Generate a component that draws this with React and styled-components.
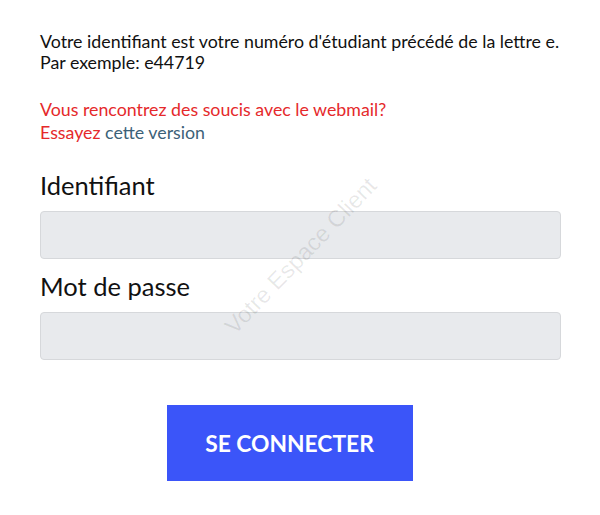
import React from "react";
import styled, { createGlobalStyle } from "styled-components";

const Global = createGlobalStyle`
  html, body { margin: 0; padding: 0; background: #fff; }
  body { font-family: Lato, "Noto Sans", sans-serif; color: #111; }
`;

const Page = styled.div`
  position: relative;
  padding: 31px 40px 0 40px;
  width: 600px;
  height: 515px;
  box-sizing: border-box;
  overflow: hidden;
`;

const Info = styled.p`
  margin: 0;
  font-size: 17.8px;
  line-height: 21px;
  color: #111;
`;

const Alert = styled.p`
  margin: 25px 0 0 0;
  font-size: 17.8px;
  line-height: 23px;
  color: #e5292b;
`;

const Link = styled.a`
  color: #3c6178;
  text-decoration: none;
`;

const Form = styled.form`
  margin-top: 26px;
  display: flex;
  flex-direction: column;
`;

const Label = styled.label`
  font-size: 25.5px;
  line-height: 30px;
  color: #111;
  margin-bottom: 11px;
  margin-top: ${(p) => (p.$spaced ? "12px" : "0")};
`;

const Input = styled.input`
  box-sizing: border-box;
  width: 521px;
  height: 48px;
  background: #e8eaed;
  border: 1px solid #d6d8db;
  border-radius: 4px;
  outline: none;
  font-size: 16px;
  padding: 0 12px;
`;

const ButtonRow = styled.div`
  display: flex;
  justify-content: center;
  margin-top: 45px;
  padding-right: 21px;
`;

const Button = styled.button`
  width: 246px;
  height: 76px;
  background: #3b55f9;
  color: #fff;
  border: none;
  font-family: Lato, "Noto Sans", sans-serif;
  font-weight: 700;
  font-size: 22.8px;
  cursor: pointer;
`;

const Watermark = styled.div`
  position: absolute;
  left: 301px;
  top: 256px;
  transform: translate(-50%, -50%) rotate(-46deg);
  font-size: 23.5px;
  color: rgba(0, 0, 0, 0.09);
  white-space: nowrap;
  pointer-events: none;
  font-family: "Liberation Sans", Arial, sans-serif;
`;

export default function App() {
  return (
    <>
      <Global />
      <Page>
        <Info>
          Votre identifiant est votre numéro d'étudiant précédé de la lettre e.
          <br />
          Par exemple: e44719
        </Info>
        <Alert>
          Vous rencontrez des soucis avec le webmail?
          <br />
          Essayez <Link href="#">cette version</Link>
        </Alert>
        <Form onSubmit={(e) => e.preventDefault()}>
          <Label htmlFor="id">Identifiant</Label>
          <Input id="id" type="text" />
          <Label htmlFor="pw" $spaced>
            Mot de passe
          </Label>
          <Input id="pw" type="password" />
          <ButtonRow>
            <Button type="submit">SE CONNECTER</Button>
          </ButtonRow>
        </Form>
        <Watermark>Votre Espace Client</Watermark>
      </Page>
    </>
  );
}
